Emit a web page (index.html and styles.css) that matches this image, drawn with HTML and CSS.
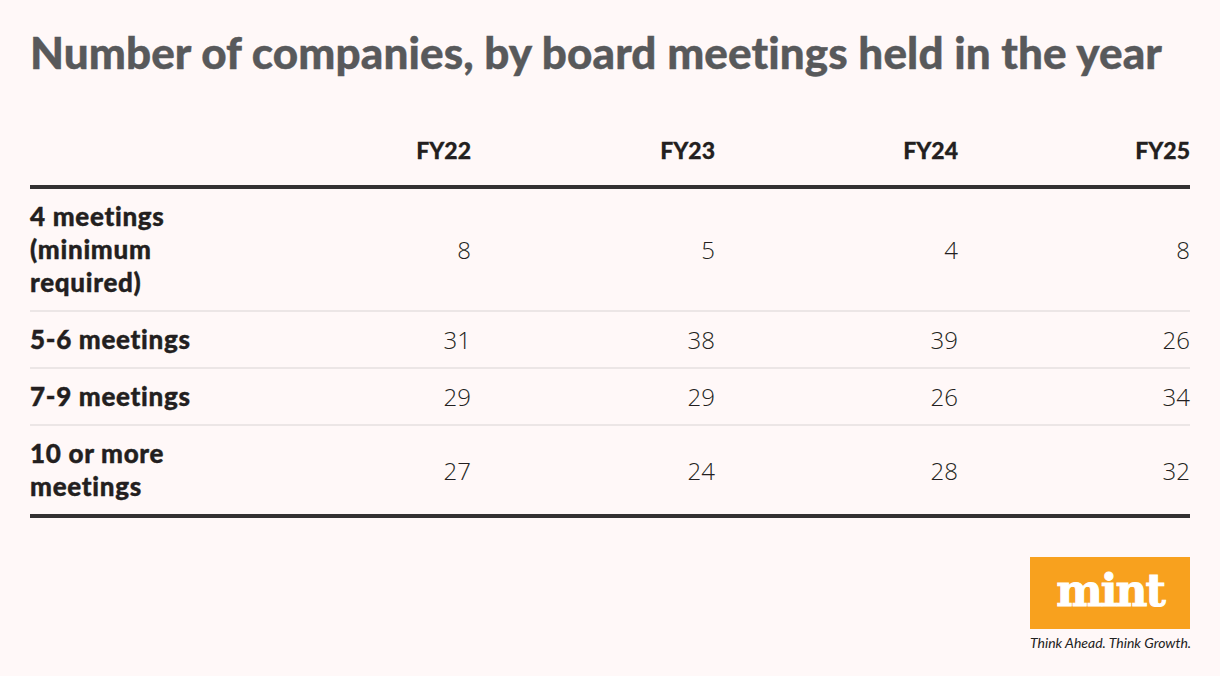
FILE: index.html
```html
<!DOCTYPE html>
<html>
<head>
<meta charset="utf-8">
<link rel="stylesheet" href="styles.css">
</head>
<body>
<div class="page">
  <h1 class="title">Number of companies, by board meetings held in the year</h1>
  <div class="table">
    <div class="row head">
      <div class="cell label"></div>
      <div class="cell num">FY22</div>
      <div class="cell num">FY23</div>
      <div class="cell num">FY24</div>
      <div class="cell num">FY25</div>
    </div>
    <div class="row">
      <div class="cell label">4 meetings<br>(minimum<br>required)</div>
      <div class="cell num">8</div>
      <div class="cell num">5</div>
      <div class="cell num">4</div>
      <div class="cell num">8</div>
    </div>
    <div class="row">
      <div class="cell label">5-6 meetings</div>
      <div class="cell num">31</div>
      <div class="cell num">38</div>
      <div class="cell num">39</div>
      <div class="cell num">26</div>
    </div>
    <div class="row">
      <div class="cell label">7-9 meetings</div>
      <div class="cell num">29</div>
      <div class="cell num">29</div>
      <div class="cell num">26</div>
      <div class="cell num">34</div>
    </div>
    <div class="row last">
      <div class="cell label">10 or more<br>meetings</div>
      <div class="cell num">27</div>
      <div class="cell num">24</div>
      <div class="cell num">28</div>
      <div class="cell num">32</div>
    </div>
  </div>
  <div class="footer">
    <div class="logo">
      <div class="logo-box"><span class="logo-word">mint</span></div>
      <div class="tagline">Think Ahead. Think Growth.</div>
    </div>
  </div>
</div>
</body>
</html>
```

FILE: styles.css
```css
html, body {
  margin: 0;
  padding: 0;
  background: #fff8f8;
}
.page {
  width: 1220px;
  height: 676px;
  box-sizing: border-box;
  padding: 24px 30px 0 30px;
  font-family: "Lato", "Open Sans", sans-serif;
}
.title {
  margin: 0;
  font-family: "Lato", sans-serif;
  font-weight: 900;
  font-size: 44px;
  line-height: 56px;
  color: #58595b;
  letter-spacing: 0.1px;
  white-space: nowrap;
  -webkit-text-stroke: 0.4px #58595b;
}
.table {
  margin-top: 54px;
  width: 1160px;
}
.row {
  display: grid;
  grid-template-columns: 197px 244px 244px 243px 232px;
  border-bottom: 2px solid #ece6e6;
}
.row.head {
  border-bottom: 4px solid #333132;
}
.row.last {
  border-bottom: 4px solid #333132;
}
.cell {
  padding: 11px 0 11px 0;
  font-size: 26px;
  line-height: 33px;
  color: #231f20;
}
.head .cell {
  padding: 0 0 18px 0;
  font-weight: 900;
  font-size: 23px;
}
.label {
  font-weight: 900;
  letter-spacing: 0.7px;
  white-space: nowrap;
  -webkit-text-stroke: 0.4px #231f20;
}
.num {
  text-align: right;
  font-family: "Open Sans", sans-serif;
  font-weight: 300;
  font-size: 24px;
  align-self: center;
}
.head .num {
  font-family: "Lato", sans-serif;
  font-weight: 900;
  -webkit-text-stroke: 0.3px #231f20;
}
.footer {
  display: flex;
  justify-content: flex-end;
  margin-top: 39px;
}
.logo {
  width: 160px;
  display: flex;
  flex-direction: column;
  align-items: stretch;
}
.logo-box {
  height: 72px;
  background: #f8a11e;
  display: flex;
  align-items: center;
  justify-content: center;
}
.logo-word {
  font-family: "DejaVu Serif", serif;
  font-weight: 700;
  font-size: 44px;
  color: #ffffff;
  letter-spacing: -2px;
  line-height: 1;
  margin-top: -4px;
  -webkit-text-stroke: 1px #ffffff;
}
.tagline {
  margin-top: 5px;
  font-family: "Lato", sans-serif;
  font-style: italic;
  font-size: 14px;
  color: #222;
  white-space: nowrap;
  letter-spacing: 0;
}
```
